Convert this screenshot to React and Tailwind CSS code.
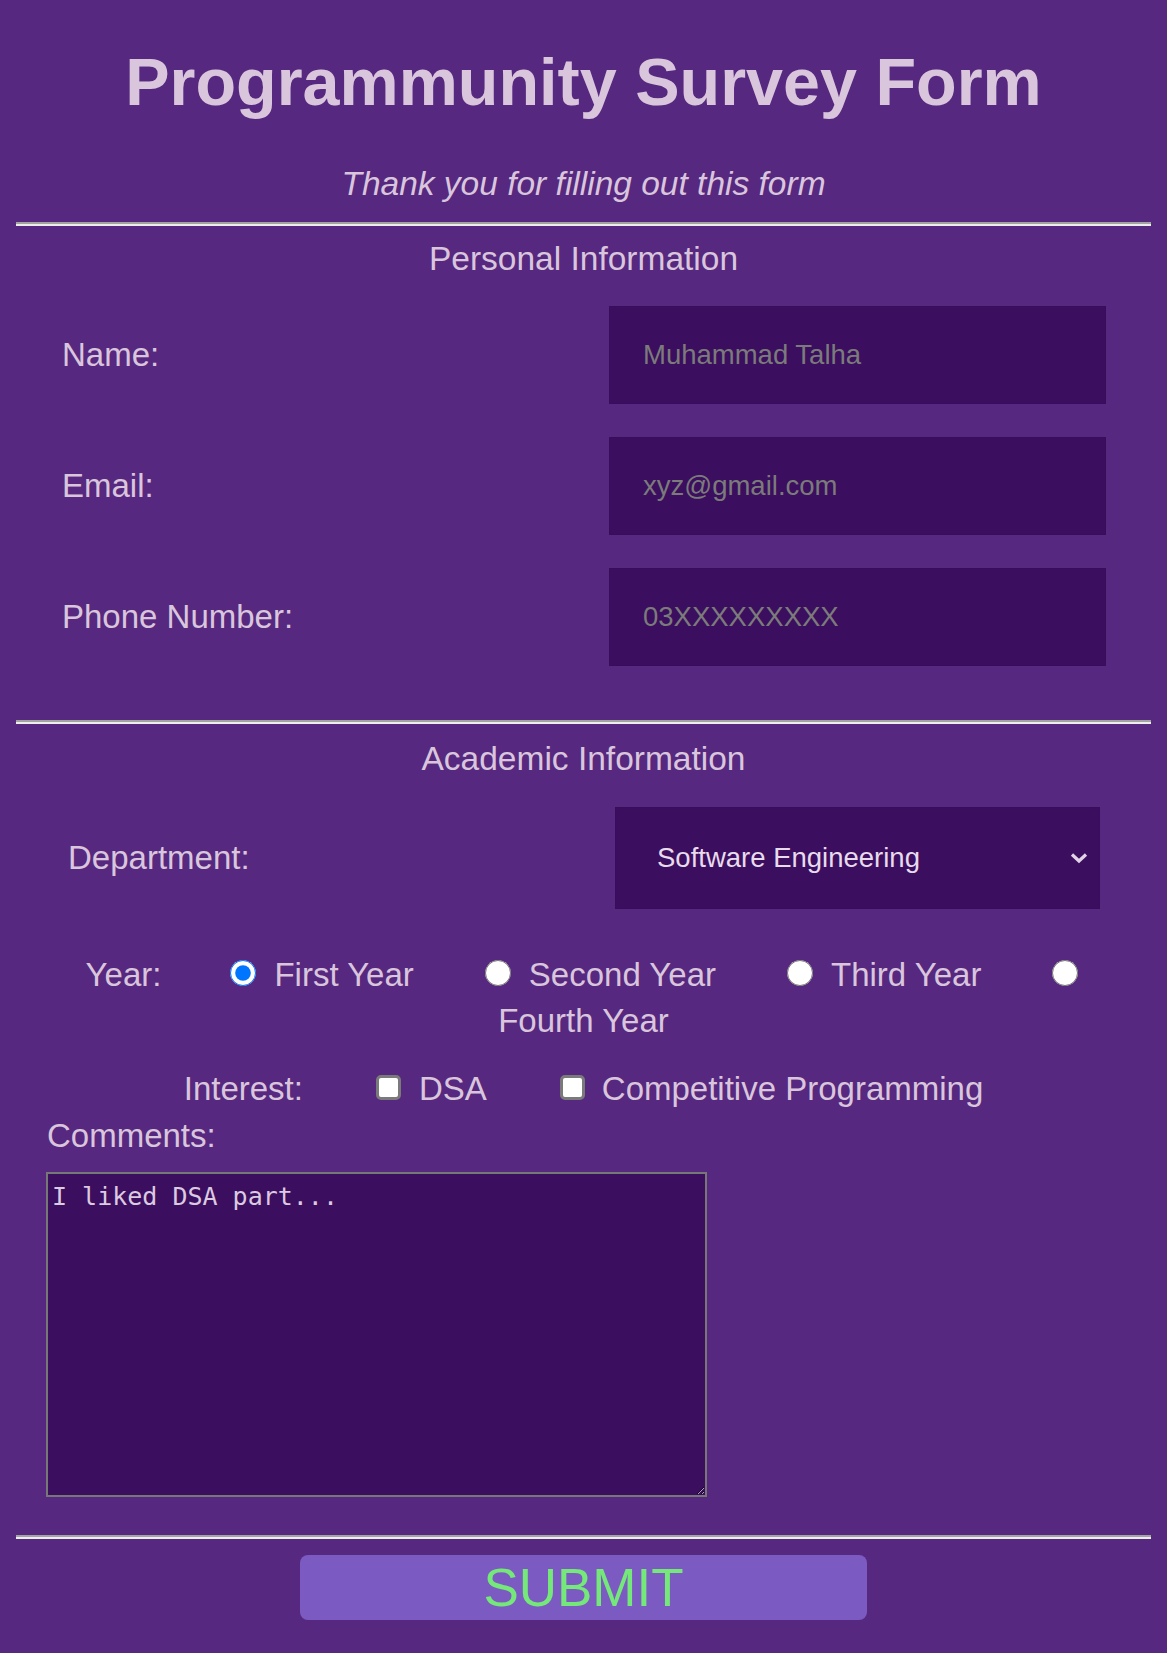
import React from "react";

const Divider = () => (
  <div className="mx-4 h-[4px] border-t-2 border-b-2 border-t-[#a3a3a3] border-b-[#ededed]" />
);

const Field = ({ label, placeholder, type, className }) => (
  <div className={`flex items-center justify-between pl-[62px] pr-[61px] ${className}`}>
    <label className="text-[33px] leading-[36px]">{label}</label>
    <input
      type={type}
      placeholder={placeholder}
      className="w-[497px] h-[98px] bg-[#3b0e5f] border border-[#3a0c5c] pl-[33px] text-[27.5px] text-[#e6d8ea] placeholder:text-[#7b7b7b] outline-none"
    />
  </div>
);

const Radio = ({ label, checked, first }) => (
  <>
    <input
      type="radio"
      name="year"
      defaultChecked={checked}
      className={`w-[26px] h-[26px] m-0 mr-[3px] align-baseline ${first ? "ml-[69px]" : "ml-[71px]"}`}
    />
    {label && <span className="ml-[15px]">{label}</span>}
  </>
);

const Check = () => (
  <input
    type="checkbox"
    className="appearance-none inline-block w-[25px] h-[25px] m-0 ml-[73px] align-baseline bg-white border-[3px] border-[#7a7a7a] rounded-[5px]"
  />
);

const App = () => {
  return (
    <div className="min-h-[1653px] bg-[#57287f] text-[#d9c6dd] font-['Liberation_Sans',Arial,sans-serif] pt-[44px]">
      <h1 className="text-center text-[66.5px] font-bold leading-[76px]">
        Programmunity Survey Form
      </h1>
      <p className="mt-[46px] mb-[20px] text-center text-[33.5px] italic leading-[36px]">
        Thank you for filling out this form
      </p>
      <Divider />

      <h2 className="mt-[15px] text-center text-[33.5px] leading-[36px]">Personal Information</h2>
      <Field label="Name:" placeholder="Muhammad Talha" type="text" className="mt-[29px]" />
      <Field label="Email:" placeholder="xyz@gmail.com" type="email" className="mt-[33px]" />
      <Field label="Phone Number:" placeholder="03XXXXXXXXX" type="tel" className="mt-[33px]" />

      <div className="mt-[54px]">
        <Divider />
      </div>

      <h2 className="mt-[17px] text-center text-[33.5px] leading-[36px]">Academic Information</h2>
      <div className="mt-[30px] flex items-center justify-between pl-[68px] pr-[67px]">
        <label className="text-[33px] leading-[36px]">Department:</label>
        <div className="relative">
          <select
            defaultValue="se"
            className="appearance-none w-[485px] h-[102px] bg-[#3b0e5f] border border-[#3a0c5c] pl-[41px] text-[27.5px] text-[#e8dbeb] outline-none"
          >
            <option value="se">Software Engineering</option>
            <option value="cs">Computer Science</option>
            <option value="ds">Data Science</option>
          </select>
          <svg
            className="absolute right-[12px] top-1/2 -translate-y-1/2 pointer-events-none"
            width="18"
            height="12"
            viewBox="0 0 18 12"
          >
            <path d="M2 2.5 L9 9 L16 2.5" fill="none" stroke="#e2d4e6" strokeWidth="3.2" />
          </svg>
        </div>
      </div>

      <div className="mt-[43px] text-center text-[33px] leading-[46px]">
        <div>
          <span>Year:</span>
          <Radio label="First Year" checked first />
          <Radio label="Second Year" />
          <Radio label="Third Year" />
          <Radio />
        </div>
        <div>Fourth Year</div>
      </div>

      <div className="mt-[22px] text-center text-[33px] leading-[46px]">
        <span>Interest:</span>
        <Check />
        <span className="ml-[18px]">DSA</span>
        <Check />
        <span className="ml-[17px]">Competitive Programming</span>
      </div>

      <label className="block mt-[6px] pl-[47px] text-[33px] leading-[36px]">Comments:</label>
      <textarea
        placeholder="I liked DSA part..."
        className="block mt-[18px] ml-[46px] w-[661px] h-[325px] bg-[#3b0e5f] border-2 border-[#777777] p-[4px] font-['DejaVu_Sans_Mono',monospace] text-[25px] text-[#dccae0] placeholder:text-[#dccae0] outline-none"
      />

      <div className="mt-[38px]">
        <Divider />
      </div>

      <button className="block mx-auto mt-[16px] w-[567px] h-[65px] rounded-[8px] bg-[#7b5bc1] text-[53px] leading-[65px] text-[#74e879]">
        SUBMIT
      </button>
    </div>
  );
};

export default App;
